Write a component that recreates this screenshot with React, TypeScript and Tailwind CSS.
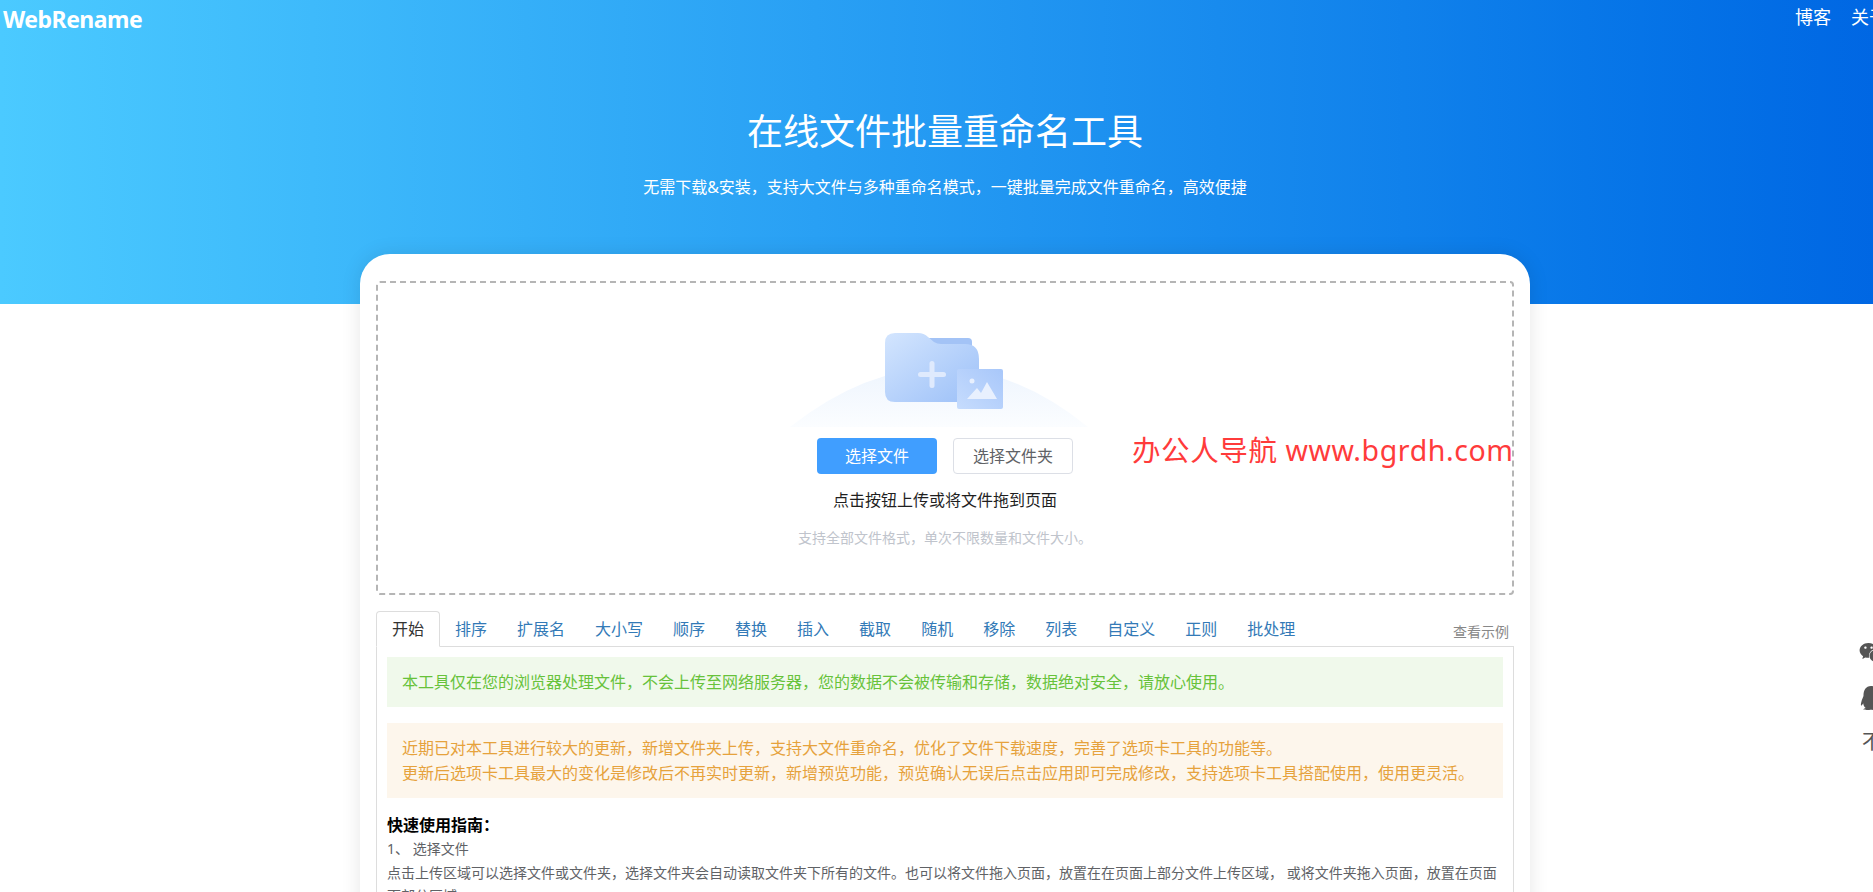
import React from "react";
import { FaWeixin, FaQq } from "react-icons/fa";

const tabs = ["排序", "扩展名", "大小写", "顺序", "替换", "插入", "截取", "随机", "移除", "列表", "自定义", "正则", "批处理"];

function Illustration() {
  return (
    <svg width="300" height="100" viewBox="0 0 300 100" className="mr-[10px] block">
      <defs>
        <linearGradient id="arc" x1="0" y1="0" x2="0" y2="1">
          <stop offset="0" stopColor="#eef5fe" />
          <stop offset="1" stopColor="#fbfdff" />
        </linearGradient>
        <linearGradient id="folder" x1="0" y1="0" x2="1" y2="1">
          <stop offset="0" stopColor="#d3e5fe" />
          <stop offset="1" stopColor="#9cc0f8" />
        </linearGradient>
        <linearGradient id="pic" x1="0" y1="1" x2="1" y2="0">
          <stop offset="0" stopColor="#c6dcfd" />
          <stop offset="1" stopColor="#a8c7fa" />
        </linearGradient>
      </defs>
      <path d="M0 97 Q75 38 150 38 Q225 38 298 97 Z" fill="url(#arc)" />
      <path d="M136 8 H178 Q182 8 182 12 V22 H136 Z" fill="#a3c3f6" />
      <path d="M95 13 Q95 3 105 3 H128 Q134 3 138 7 L144 12 Q147 14 151 14 H175 Q189 14 189 29 V62 Q189 72 179 72 H105 Q95 72 95 62 Z" fill="url(#folder)" />
      <rect x="139.5" y="31" width="5" height="27" rx="2.5" fill="#dfeafd" />
      <rect x="128" y="42" width="28" height="5" rx="2.5" fill="#dfeafd" />
      <rect x="167" y="39" width="46" height="40" rx="2" fill="url(#pic)" />
      <circle cx="182" cy="51" r="2.5" fill="#e8f0fe" />
      <path d="M177 69 L187 58 L191 63 L197 52 L207 69 Z" fill="#e8f0fe" />
    </svg>
  );
}

export default function App() {
  return (
    <div
      className="relative h-[892px] w-full overflow-hidden bg-white text-[#606266]"
      style={{ fontFamily: '"Noto Sans", "Noto Sans CJK SC", sans-serif' }}
    >
      <div className="w-[1890px]">
        <header className="flex h-[304px] flex-col bg-gradient-to-r from-[#4bcaff] to-[#0066e3] text-white">
          <nav className="flex items-start justify-between pl-[3px]">
            <a className="text-[23px] leading-[38px] font-bold tracking-[-0.5px]">WebRename</a>
            <div className="flex gap-[20px] pr-[3px] text-[18px] leading-[34px]">
              <a>博客</a>
              <a>关于</a>
            </div>
          </nav>
          <h1 className="mt-[69px] text-center text-[36px] leading-[50px] font-normal">在线文件批量重命名工具</h1>
          <p className="mt-[18px] text-center text-[16px] leading-[24px]">无需下载&amp;安装，支持大文件与多种重命名模式，一键批量完成文件重命名，高效便捷</p>
        </header>

        <main className="mx-auto -mt-[50px] w-[1170px] rounded-t-[30px] bg-white px-[16px] pt-[27px] pb-[40px] shadow-[0_0_20px_rgba(0,0,0,0.1)]">
          <section className="flex h-[314px] flex-col items-center rounded-[4px] border-2 border-dashed border-[#b5b5b5] pt-[47px]">
            <Illustration />
            <div className="mt-[8px] flex gap-[16px]">
              <button className="h-[36px] w-[120px] rounded-[4px] bg-[#409eff] text-[16px] text-white">选择文件</button>
              <button className="h-[36px] w-[120px] rounded-[4px] border border-[#dcdfe6] bg-white text-[16px] text-[#606266]">选择文件夹</button>
            </div>
            <p className="mt-[14px] text-[16px] leading-[24px] text-[#1f1f1f]">点击按钮上传或将文件拖到页面</p>
            <p className="mt-[14px] text-[14px] leading-[24px] text-[#c0c4cc]">支持全部文件格式，单次不限数量和文件大小。</p>
          </section>

          <div className="mt-[16px] flex h-[36px] items-stretch border-b border-[#dddddd]">
            <a className="z-10 -mb-px flex items-center rounded-t-[4px] border border-b-white border-[#dddddd] bg-white px-[15px] text-[16px] text-[#333333]">开始</a>
            {tabs.map((t) => (
              <a key={t} className="flex items-center px-[15px] text-[16px] text-[#337ab7]">{t}</a>
            ))}
            <a className="mr-[5px] ml-auto self-end pb-[2px] text-[14px] leading-[24px] text-[#888888]">查看示例</a>
          </div>

          <div className="border-x border-[#dddddd] px-[10px] pt-[10px]">
            <div className="bg-[#f0f9eb] px-[15px] py-[12.5px] text-[16px] leading-[25px] text-[#67c23a]">
              本工具仅在您的浏览器处理文件，不会上传至网络服务器，您的数据不会被传输和存储，数据绝对安全，请放心使用。
            </div>
            <div className="mt-[16px] bg-[#fdf6ec] px-[15px] py-[12.5px] text-[16px] leading-[25px] text-[#e6a23c]">
              <p>近期已对本工具进行较大的更新，新增文件夹上传，支持大文件重命名，优化了文件下载速度，完善了选项卡工具的功能等。</p>
              <p>更新后选项卡工具最大的变化是修改后不再实时更新，新增预览功能，预览确认无误后点击应用即可完成修改，支持选项卡工具搭配使用，使用更灵活。</p>
            </div>
            <h3 className="mt-[16px] text-[16px] leading-[23px] font-bold text-black">快速使用指南：</h3>
            <p className="text-[14px] leading-[24px]">1、 选择文件</p>
            <p className="text-[14px] leading-[23px]">点击上传区域可以选择文件或文件夹，选择文件夹会自动读取文件夹下所有的文件。也可以将文件拖入页面，放置在在页面上部分文件上传区域， 或将文件夹拖入页面，放置在页面下部分区域。</p>
          </div>
        </main>
      </div>

      <div className="absolute top-[429px] left-[1132px] text-[28.5px] leading-[42px] tracking-[0.6px] whitespace-nowrap text-[#ff3b3b]">办公人导航 www.bgrdh.com</div>

      <div className="absolute top-[640px] left-[1859px] flex w-[40px] flex-col items-start gap-[20px] text-[#555555]">
        <FaWeixin className="h-[26px] w-[26px]" />
        <FaQq className="h-[24px] w-[24px]" />
        <span className="ml-[3px] text-[20px] leading-[24px]">不</span>
      </div>
    </div>
  );
}
